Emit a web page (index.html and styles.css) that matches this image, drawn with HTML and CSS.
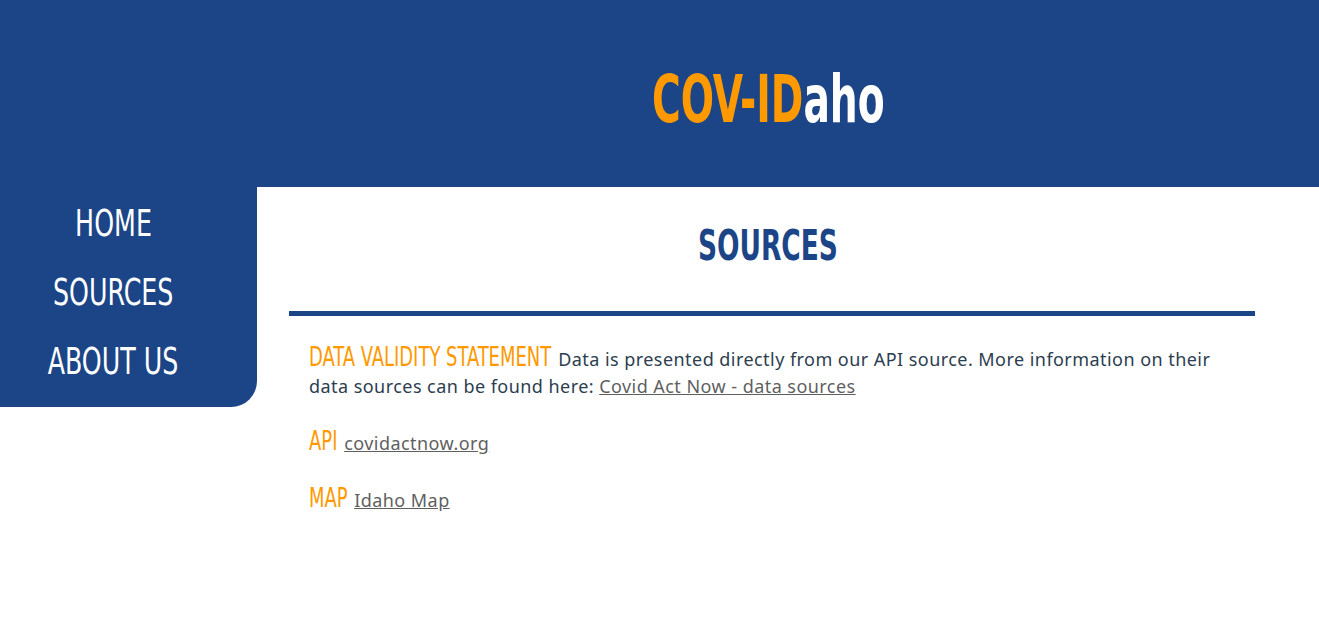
FILE: index.html
```html
<!DOCTYPE html>
<html>
<head>
<meta charset="utf-8">
<link rel="stylesheet" href="styles.css">
</head>
<body>
<header class="top">
  <div class="top-spacer"></div>
  <h1 class="brand"><span class="brand-in"><span class="brand-or">COV-ID</span><span class="brand-wh">aho</span></span></h1>
</header>
<div class="layout">
  <nav class="side">
    <a class="nav-link" href="#">HOME</a>
    <a class="nav-link" href="#">SOURCES</a>
    <a class="nav-link" href="#">ABOUT US</a>
  </nav>
  <main class="main">
    <h2 class="page-title"><span class="title-in">SOURCES</span></h2>
    <hr class="rule">
    <div class="entries">
      <p class="entry"><span class="label label-dvs"><span class="label-in">DATA VALIDITY STATEMENT</span></span> Data is presented directly from our API source. More information on their data sources can be found here: <a class="src" href="#">Covid Act Now - data sources</a></p>
      <p class="entry"><span class="label label-api"><span class="label-in">API</span></span> <a class="src" href="#">covidactnow.org</a></p>
      <p class="entry"><span class="label label-map"><span class="label-in">MAP</span></span> <a class="src" href="#">Idaho Map</a></p>
    </div>
  </main>
</div>
</body>
</html>
```
FILE: styles.css
```css
html, body { margin: 0; padding: 0; background: #fff; }
body { font-family: "Noto Sans", sans-serif; color: #2c3e50; }
.top {
  background: #1c4587;
  height: 187px;
  box-sizing: border-box;
  display: grid;
  grid-template-columns: 257px 1fr;
  align-items: start;
  padding-top: 60px;
}
.brand {
  margin: 0;
  padding-right: 40px;
  text-align: center;
  font-family: "DejaVu Sans Condensed", "DejaVu Sans", sans-serif;
  font-weight: bold;
  font-size: 66px;
  line-height: 80px;
}
.brand-in { display: inline-block; transform: scaleX(0.66); white-space: nowrap; }
.brand-or { color: #ff9900; }
.brand-wh { color: #fff; }
.layout { display: grid; grid-template-columns: 257px 1fr; align-items: start; }
.side {
  background: #1c4587;
  border-bottom-right-radius: 26px;
  height: 220px;
  display: flex;
  flex-direction: column;
  align-items: center;
  padding-right: 31px;
  box-sizing: border-box;
  padding-top: 16px;
  gap: 27px;
}
.nav-link {
  color: #fff;
  text-decoration: none;
  font-family: "DejaVu Sans Condensed", "DejaVu Sans", sans-serif;
  font-size: 37px;
  line-height: 42px;
  display: inline-block;
  white-space: nowrap;
  transform: scaleX(0.76);
}
.main { padding: 24px 64px 0 32px; }
.page-title {
  margin: 0;
  text-align: center;
  color: #1c4587;
  font-family: "DejaVu Sans Condensed", "DejaVu Sans", sans-serif;
  font-weight: bold;
  font-size: 42px;
  line-height: 70px;
  padding-right: 8px;
}
.title-in { display: inline-block; transform: scaleX(0.7); white-space: nowrap; }
.rule { border: 0; height: 5px; background: #1c4587; margin: 30px 0 0 0; }
.entries { padding: 30px 20px 0 20px; }
.entry { margin: 0 0 30px 0; font-size: 18px; line-height: 27px; letter-spacing: 0.45px; }
.label {
  display: inline-block;
  color: #ff9900;
  font-family: "DejaVu Sans Condensed", "DejaVu Sans", sans-serif;
  font-size: 27px;
  line-height: 22px;
  letter-spacing: 0;
  white-space: nowrap;
}
.label-in { display: inline-block; transform: scaleX(0.74); transform-origin: left center; }
.label-dvs { width: 244px; }
.label-api { width: 30px; }
.label-map { width: 40px; }
.src { color: #5f5f5f; }
```
